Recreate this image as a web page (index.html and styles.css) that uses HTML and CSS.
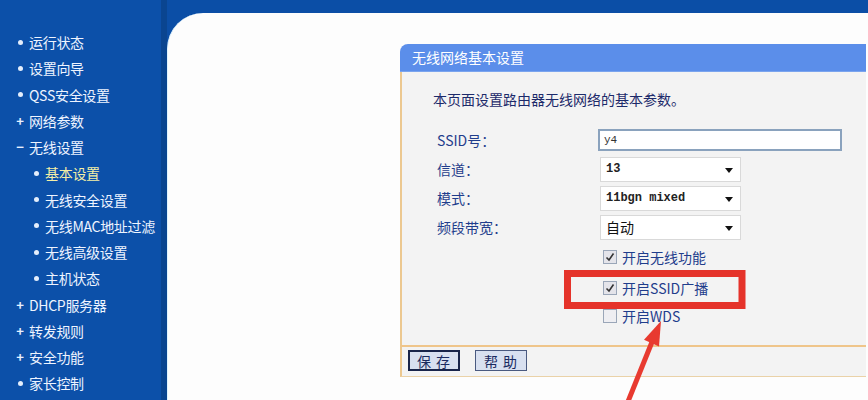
FILE: index.html
```html
<!DOCTYPE html>
<html lang="zh-CN">
<head>
    <meta charset="UTF-8">
    <title>无线网络基本设置</title>
    <link rel="stylesheet" href="styles.css">
</head>
<body>
    <div class="page">
        <nav class="sidebar">
            <ul class="menu">
                <li class="item dot">运行状态</li>
                <li class="item dot">设置向导</li>
                <li class="item dot">QSS安全设置</li>
                <li class="item plus">网络参数</li>
                <li class="item minus">无线设置</li>
                <li class="item sub dot active">基本设置</li>
                <li class="item sub dot">无线安全设置</li>
                <li class="item sub dot">无线MAC地址过滤</li>
                <li class="item sub dot">无线高级设置</li>
                <li class="item sub dot">主机状态</li>
                <li class="item plus">DHCP服务器</li>
                <li class="item plus">转发规则</li>
                <li class="item plus">安全功能</li>
                <li class="item dot">家长控制</li>
            </ul>
        </nav>
        <main class="main">
            <section class="panel">
                <h2 class="panel-title">无线网络基本设置</h2>
                <div class="panel-body">
                    <p class="intro">本页面设置路由器无线网络的基本参数。</p>
                    <div class="form">
                        <label class="label">SSID号：</label>
                        <div class="field"><div class="text-input">y4</div></div>
                        <label class="label">信道：</label>
                        <div class="field"><div class="select mono">13</div></div>
                        <label class="label">模式：</label>
                        <div class="field"><div class="select mono">11bgn mixed</div></div>
                        <label class="label">频段带宽：</label>
                        <div class="field"><div class="select">自动</div></div>
                    </div>
                    <div class="checks">
                        <div class="check-row row-1"><span class="box checked"><svg width="12" height="12" viewBox="0 0 12 12"><path d="M2.5 6.5 L5 9 L9.5 2.5" fill="none" stroke="#333" stroke-width="1.6"/></svg></span>开启无线功能</div>
                        <div class="check-row row-2"><span class="box checked"><svg width="12" height="12" viewBox="0 0 12 12"><path d="M2.5 6.5 L5 9 L9.5 2.5" fill="none" stroke="#333" stroke-width="1.6"/></svg></span>开启SSID广播</div>
                        <div class="check-row row-3"><span class="box"></span>开启WDS</div>
                    </div>
                </div>
                <div class="panel-foot">
                    <button class="btn btn-save">保 存</button>
                    <button class="btn">帮 助</button>
                </div>
            </section>
        </main>
        <svg class="annot" width="868" height="400" viewBox="0 0 868 400">
            <rect x="567.5" y="273.5" width="174.5" height="32" fill="none" stroke="#e5332a" stroke-width="7"/>
            <line x1="627" y1="404" x2="652" y2="342" stroke="#e83a30" stroke-width="5"/>
            <polygon points="661,321 644,339.8 659,346.5" fill="#e83a30"/>
        </svg>
    </div>
</body>
</html>
```

FILE: styles.css
```css
* {
    box-sizing: border-box;
}
body {
    margin: 0;
    width: 868px;
    height: 400px;
    overflow: hidden;
    background-color: #0b4ea6;
    font-family: "Noto Sans CJK SC", sans-serif;
}
.page {
    position: relative;
    display: flex;
    height: 400px;
}

/* left menu */
.sidebar {
    width: 167px;
    flex-shrink: 0;
    background-color: #0c50a9;
    border-right: 6px solid #0a4590;
}
.menu {
    list-style: none;
    margin: 0;
    padding: 29px 0 0;
}
.item {
    display: flex;
    align-items: center;
    height: 26.25px;
    padding-left: 15px;
    color: #eef4ff;
    font-size: 14px;
    letter-spacing: -0.3px;
    white-space: nowrap;
}
.item::before {
    display: block;
    width: 10px;
    margin-right: 4px;
    text-align: center;
    font-weight: bold;
    color: #e8f0ff;
}
.item.dot::before {
    content: "";
    width: 5px;
    height: 5px;
    margin: 0 6px 0 3px;
    border-radius: 50%;
    background-color: #e4eefc;
}
.item.plus::before {
    content: "+";
    font-size: 13px;
    line-height: 14px;
}
.item.minus::before {
    content: "−";
    font-size: 13px;
    line-height: 14px;
}
.item.sub {
    padding-left: 31px;
}
.item.active {
    color: #f4efa6;
}

/* content area */
.main {
    flex: 1;
    margin-top: 13px;
    background-color: #fdfdfd;
    border-left: 1px solid #dff4ff;
    border-top-left-radius: 36px;
    padding: 31px 2px 0 232px;
}
.panel-title {
    margin: 0;
    height: 28px;
    line-height: 27px;
    padding-left: 12px;
    background-color: #5b8eea;
    border-bottom: 1px solid #7aa4ee;
    border-radius: 8px 0 0 0;
    color: #ffffff;
    font-size: 14px;
    font-weight: normal;
}
.panel-body {
    height: 273px;
    padding: 17px 0 0 31px;
    background-color: #f3f3f3;
    border-left: 2px solid #ecc890;
}
.intro {
    margin: 0;
    font-size: 14px;
    line-height: 20px;
    color: #1c2a6a;
}
.form {
    display: grid;
    grid-template-columns: 161px 250px;
    grid-auto-rows: 28px;
    row-gap: 1px;
    margin-top: 17px;
    padding-left: 4px;
}
.label {
    display: flex;
    align-items: center;
    font-size: 14px;
    color: #1f3d8c;
}
.field {
    display: flex;
    align-items: center;
}
.text-input {
    width: 244px;
    height: 22px;
    padding-left: 4px;
    background-color: #ffffff;
    border: 2px solid #8aa2bd;
    font-family: "Liberation Mono", monospace;
    font-size: 11px;
    line-height: 18px;
    color: #333;
}
.select {
    position: relative;
    width: 141px;
    height: 25px;
    margin-left: 2px;
    padding-left: 5px;
    background-color: #ffffff;
    border: 1px solid #d9d9d9;
    font-size: 14px;
    line-height: 23px;
    color: #111;
}
.select.mono {
    font-family: "Liberation Mono", monospace;
    font-size: 12px;
    font-weight: bold;
    color: #222;
}
.select::after {
    content: "";
    position: absolute;
    right: 7px;
    top: 10px;
    border-left: 4px solid transparent;
    border-right: 4px solid transparent;
    border-top: 5px solid #111;
}
.checks {
    padding-left: 170px;
}
.check-row {
    display: flex;
    align-items: center;
    height: 18px;
    font-size: 14px;
    color: #1f3d8c;
}
.row-1 {
    margin-top: 7px;
}
.row-2 {
    margin-top: 13px;
}
.row-3 {
    margin-top: 10px;
}
.box {
    display: flex;
    align-items: center;
    justify-content: center;
    width: 14px;
    height: 14px;
    margin-right: 5px;
    background-color: #eeeef2;
    border: 1px solid #9aa6b8;
}
.box.checked {
    background-color: #e4e4ea;
}
.panel-foot {
    display: flex;
    gap: 15px;
    height: 32px;
    padding: 3px 0 0 6px;
    background-color: #f3f3f3;
    border-left: 2px solid #ecc890;
    border-top: 2px solid #efc58a;
    border-bottom: 1px solid #ead2a8;
}
.btn {
    width: 52px;
    height: 21px;
    padding: 0;
    background-color: #d8e0f0;
    border: 1px solid #4a5a80;
    font-family: "Noto Sans CJK SC", sans-serif;
    font-size: 14px;
    line-height: 18px;
    letter-spacing: 1px;
    color: #1a2a60;
}
.btn-save {
    border: 2px solid #18244a;
}

/* annotation drawn over the screenshot */
.annot {
    position: absolute;
    top: 0;
    left: 0;
    pointer-events: none;
}
```
